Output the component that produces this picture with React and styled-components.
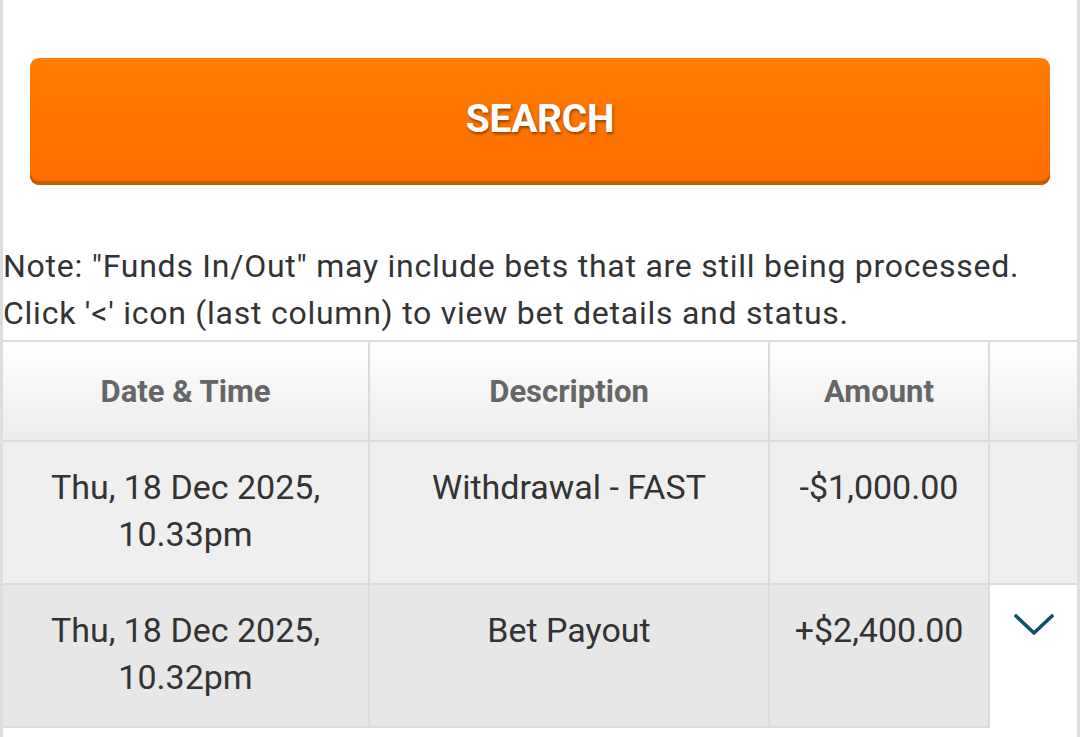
import React from "react";
import styled, { createGlobalStyle } from "styled-components";

const GlobalStyle = createGlobalStyle`
  html, body {
    margin: 0;
    padding: 0;
    background: #fff;
    font-family: Roboto, "Liberation Sans", Arial, sans-serif;
  }
`;

const rows = [
  {
    date: "Thu, 18 Dec 2025,",
    time: "10.33pm",
    desc: "Withdrawal - FAST",
    amount: "-$1,000.00",
    tone: "#efefef",
    expand: false,
  },
  {
    date: "Thu, 18 Dec 2025,",
    time: "10.32pm",
    desc: "Bet Payout",
    amount: "+$2,400.00",
    tone: "#e7e7e7",
    expand: true,
  },
];

export default function App() {
  return (
    <Page>
      <GlobalStyle />
      <ButtonArea>
        <SearchButton type="button">SEARCH</SearchButton>
      </ButtonArea>
      <Note>
        Note: "Funds In/Out" may include bets that are still being processed.
        <br />
        Click '&lt;' icon (last column) to view bet details and status.
      </Note>
      <Table>
        <colgroup>
          <col style={{ width: 366 }} />
          <col style={{ width: 400 }} />
          <col style={{ width: 220 }} />
          <col />
        </colgroup>
        <thead>
          <tr>
            <HeadCell>Date &amp; Time</HeadCell>
            <HeadCell>Description</HeadCell>
            <HeadCell>Amount</HeadCell>
            <HeadCell $last />
          </tr>
        </thead>
        <tbody>
          {rows.map((r, i) => (
            <tr key={i}>
              <Cell $bg={r.tone}>
                {r.date}
                <br />
                {r.time}
              </Cell>
              <Cell $bg={r.tone}>{r.desc}</Cell>
              <Cell $bg={r.tone}>{r.amount}</Cell>
              {r.expand ? (
                <ToggleCell>
                  <svg width="42" height="24" viewBox="0 0 42 24">
                    <path
                      d="M3 3 L21 20 L39 3"
                      fill="none"
                      stroke="#0f4f6c"
                      strokeWidth="3.6"
                      strokeLinecap="round"
                      strokeLinejoin="round"
                    />
                  </svg>
                </ToggleCell>
              ) : (
                <Cell $bg={r.tone} $last />
              )}
            </tr>
          ))}
        </tbody>
      </Table>
    </Page>
  );
}

const Page = styled.div`
  min-height: 100vh;
  box-sizing: border-box;
  border-left: 3px solid #dedede;
  border-right: 3px solid #dedede;
  background: #fff;
  overflow: hidden;
`;

const ButtonArea = styled.div`
  padding: 58px 27px 0;
`;

const SearchButton = styled.button`
  display: block;
  width: 100%;
  height: 127px;
  border: none;
  border-radius: 9px;
  background: linear-gradient(to bottom, #ff7d00, #ff6c00);
  box-shadow: inset 0 -4px 0 #c35b00;
  color: #fff;
  font-family: Roboto, "Liberation Sans", Arial, sans-serif;
  font-weight: 700;
  font-size: 39px;
  letter-spacing: -0.3px;
  text-shadow: 1px 2px 3px rgba(90, 40, 0, 0.65);
  padding: 0 0 6px;
  cursor: pointer;
`;

const Note = styled.p`
  margin: 58px 0 3px;
  font-size: 32px;
  letter-spacing: 0.75px;
  line-height: 47px;
  color: #333;
  white-space: nowrap;
`;

const Table = styled.table`
  width: 100%;
  border-collapse: collapse;
  table-layout: fixed;
  border-top: 2px solid #dcdcdc;
`;

const HeadCell = styled.th`
  height: 98px;
  padding: 0 8px;
  border: 2px solid #dcdcdc;
  border-top: none;
  border-right: ${(p) => (p.$last ? "none" : "2px solid #dcdcdc")};
  background: linear-gradient(to bottom, #ffffff, #ececec);
  color: #666;
  font-size: 31px;
  font-weight: 700;
  text-align: center;
  vertical-align: middle;

  &:first-child {
    border-left: none;
  }
`;

const Cell = styled.td`
  padding: 22px 6px 25px;
  border: 2px solid #dcdcdc;
  border-right: ${(p) => (p.$last ? "none" : "2px solid #dcdcdc")};
  background: ${(p) => p.$bg};
  color: #333;
  font-size: 34px;
  line-height: 47px;
  text-align: center;
  vertical-align: top;

  &:first-child {
    border-left: none;
  }
`;

const ToggleCell = styled.td`
  padding: 28px 0 0;
  border-left: 2px solid #dcdcdc;
  background: #fff;
  text-align: center;
  vertical-align: top;
`;
